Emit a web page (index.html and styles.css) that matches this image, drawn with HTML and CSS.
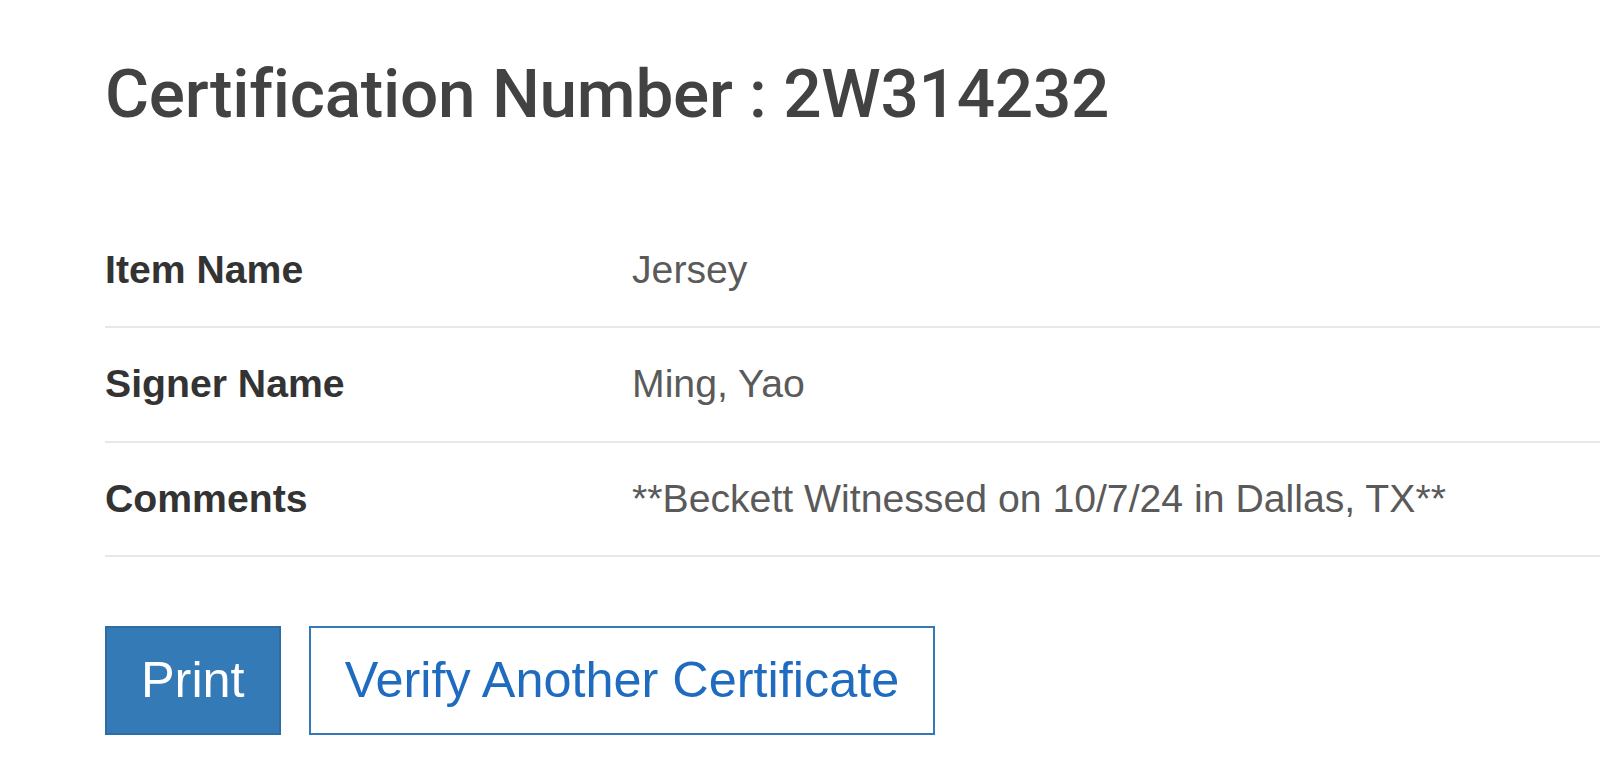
FILE: index.html
```html
<!DOCTYPE html>
<html>
<head>
<meta charset="utf-8">
<link rel="stylesheet" href="styles.css">
</head>
<body>
<div class="page">
  <h1 class="title">Certification Number : 2W314232</h1>
  <div class="details">
    <div class="row"><div class="label">Item Name</div><div class="value">Jersey</div></div>
    <div class="row"><div class="label">Signer Name</div><div class="value">Ming, Yao</div></div>
    <div class="row"><div class="label">Comments</div><div class="value">**Beckett Witnessed on 10/7/24 in Dallas, TX**</div></div>
  </div>
  <div class="actions">
    <button class="btn btn-primary">Print</button>
    <button class="btn btn-outline">Verify Another Certificate</button>
  </div>
</div>
</body>
</html>
```
FILE: styles.css
```css
html, body {
  margin: 0;
  padding: 0;
  background: #ffffff;
  overflow: hidden;
}
.page {
  padding: 60px 0 0 105px;
  font-family: "Liberation Sans", Arial, sans-serif;
}
.title {
  margin: 0;
  font-family: Roboto, "Liberation Sans", Arial, sans-serif;
  font-size: 67.5px;
  line-height: 68px;
  font-weight: 500;
  color: #424242;
  letter-spacing: -0.25px;
}
.details {
  margin-top: 86px;
}
.row {
  display: flex;
  align-items: center;
  height: 112.3px;
  border-bottom: 2px solid #e8e8e8;
}
.label {
  width: 527px;
  flex: none;
  font-size: 39.2px;
  font-weight: bold;
  color: #333333;
}
.value {
  font-size: 39.2px;
  color: #5a5a5a;
}
.actions {
  display: flex;
  gap: 28px;
  margin-top: 69px;
}
.btn {
  height: 109px;
  padding: 0 34px;
  border: 2px solid #337ab7;
  border-radius: 0;
  font-family: "Liberation Sans", Arial, sans-serif;
  font-size: 50.4px;
  line-height: 1;
  cursor: pointer;
}
.btn-primary {
  background: #337ab7;
  border-color: #2e6da4;
  color: #ffffff;
}
.btn-outline {
  background: #ffffff;
  color: #1e6bbf;
}
```
